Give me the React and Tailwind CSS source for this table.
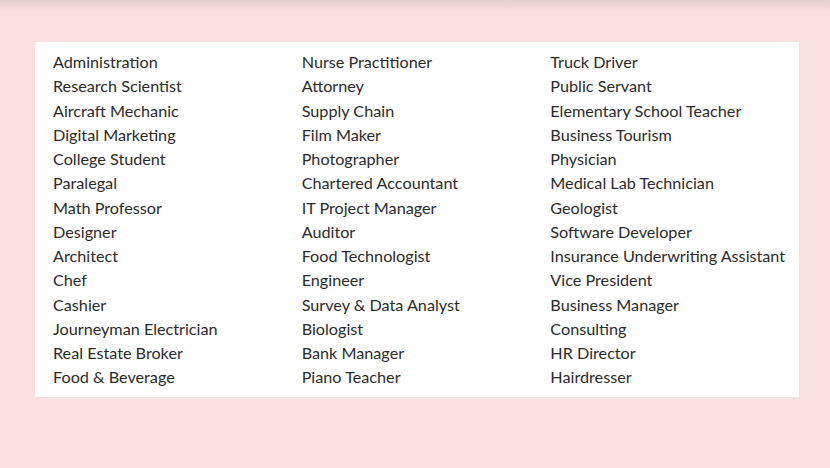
const columns = [
  [
    "Administration",
    "Research Scientist",
    "Aircraft Mechanic",
    "Digital Marketing",
    "College Student",
    "Paralegal",
    "Math Professor",
    "Designer",
    "Architect",
    "Chef",
    "Cashier",
    "Journeyman Electrician",
    "Real Estate Broker",
    "Food & Beverage",
  ],
  [
    "Nurse Practitioner",
    "Attorney",
    "Supply Chain",
    "Film Maker",
    "Photographer",
    "Chartered Accountant",
    "IT Project Manager",
    "Auditor",
    "Food Technologist",
    "Engineer",
    "Survey & Data Analyst",
    "Biologist",
    "Bank Manager",
    "Piano Teacher",
  ],
  [
    "Truck Driver",
    "Public Servant",
    "Elementary School Teacher",
    "Business Tourism",
    "Physician",
    "Medical Lab Technician",
    "Geologist",
    "Software Developer",
    "Insurance Underwriting Assistant",
    "Vice President",
    "Business Manager",
    "Consulting",
    "HR Director",
    "Hairdresser",
  ],
];

export default function App() {
  return (
    <div className="relative w-[830px] h-[468px] bg-[#fadfe2] pt-[42px] pl-[35px] font-['Lato',sans-serif]">
      {/* soft shadow strip along the top edge */}
      <div className="absolute top-0 left-0 right-0 h-[12px] bg-gradient-to-b from-[#e6d0d2] to-[#fadfe2]" />
      <div className="relative w-[764px] h-[355px] bg-white pt-[8px] pl-[18px] flex">
        {columns.map((col, i) => (
          <div key={i} className="w-[249px] flex flex-col">
            {col.map((item) => (
              <div
                key={item}
                className="h-[24.25px] leading-[24.25px] text-[16.2px] text-[#2b2b2b] whitespace-nowrap"
              >
                {item}
              </div>
            ))}
          </div>
        ))}
      </div>
    </div>
  );
}
